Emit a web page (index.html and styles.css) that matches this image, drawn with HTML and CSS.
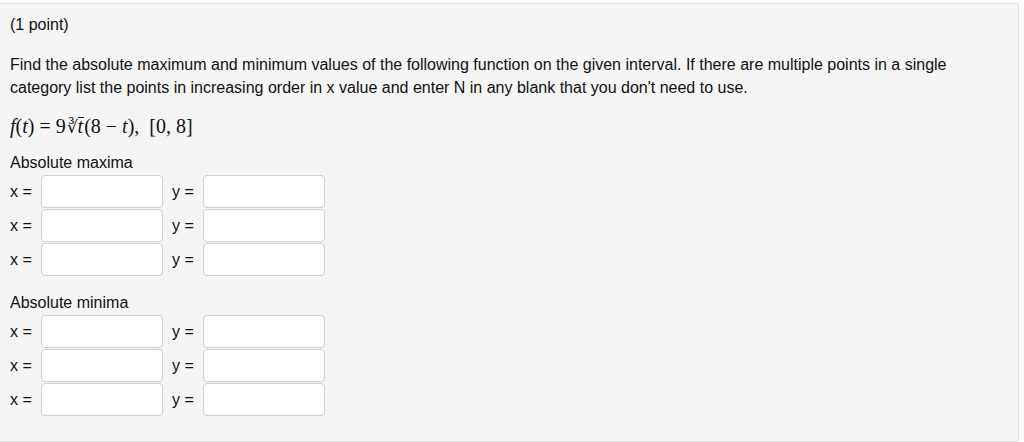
FILE: index.html
```html
<!DOCTYPE html>
<html>
<head>
<meta charset="utf-8">
<link rel="stylesheet" href="styles.css">
</head>
<body>
<div class="panel">
  <p class="points">(1 point)</p>
  <p class="prompt">Find the absolute maximum and minimum values of the following function on the given interval. If there are multiple points in a single category list the points in increasing order in x value and enter N in any blank that you don't need to use.</p>
  <p class="formula"><i>f</i>(<i>t</i>) = 9<span class="rsign">∛</span><span class="rad"><i>t</i></span>(8 − <i>t</i>), &nbsp;[0, 8]</p>

  <p class="group-title">Absolute maxima</p>
  <div class="rows">
    <div class="row"><span class="lbl">x =</span><span class="box"></span><span class="lbl lbl-y">y =</span><span class="box"></span></div>
    <div class="row"><span class="lbl">x =</span><span class="box"></span><span class="lbl lbl-y">y =</span><span class="box"></span></div>
    <div class="row"><span class="lbl">x =</span><span class="box"></span><span class="lbl lbl-y">y =</span><span class="box"></span></div>
  </div>

  <p class="group-title second">Absolute minima</p>
  <div class="rows">
    <div class="row"><span class="lbl">x =</span><span class="box"></span><span class="lbl lbl-y">y =</span><span class="box"></span></div>
    <div class="row"><span class="lbl">x =</span><span class="box"></span><span class="lbl lbl-y">y =</span><span class="box"></span></div>
    <div class="row"><span class="lbl">x =</span><span class="box"></span><span class="lbl lbl-y">y =</span><span class="box"></span></div>
  </div>
</div>
</body>
</html>
```

FILE: styles.css
```css
html, body {
  margin: 0;
  padding: 0;
  background: #ffffff;
}
body {
  font-family: "Liberation Sans", Arial, sans-serif;
  font-size: 16px;
  color: #111111;
}
.panel {
  box-sizing: border-box;
  margin-top: 3px;
  width: 1019px;
  height: 439px;
  background: #f5f5f5;
  border: 1px solid #e2e2e2;
  border-left: none;
  border-radius: 0 3px 3px 0;
  padding: 9px 10px 0 10px;
}
p {
  margin: 0;
  line-height: 23px;
}
.prompt {
  margin-top: 17px;
  width: 975px;
}
.formula {
  font-family: "Liberation Serif", "Times New Roman", serif;
  font-size: 20px;
  line-height: 28px;
  margin-top: 13px;
  color: #111;
}
.formula i {
  font-style: italic;
}
.rsign {
  font-family: "DejaVu Serif", serif;
  font-size: 17px;
  margin-left: 1px;
}
.rad {
  border-top: 1px solid #111;
  display: inline-block;
  line-height: 17px;
  padding-right: 1px;
}
.group-title {
  margin-top: 10px;
}
.group-title.second {
  margin-top: 15px;
}
.rows {
  display: flex;
  flex-direction: column;
  gap: 1px;
  margin-top: 1px;
}
.row {
  display: flex;
  align-items: center;
  height: 33px;
}
.lbl {
  width: 31px;
  line-height: 33px;
}
.lbl-y {
  width: 31px;
  padding-left: 9px;
}
.box {
  box-sizing: border-box;
  width: 122px;
  height: 33px;
  background: #ffffff;
  border: 1px solid #cfcfcf;
  border-radius: 4px;
}
```
